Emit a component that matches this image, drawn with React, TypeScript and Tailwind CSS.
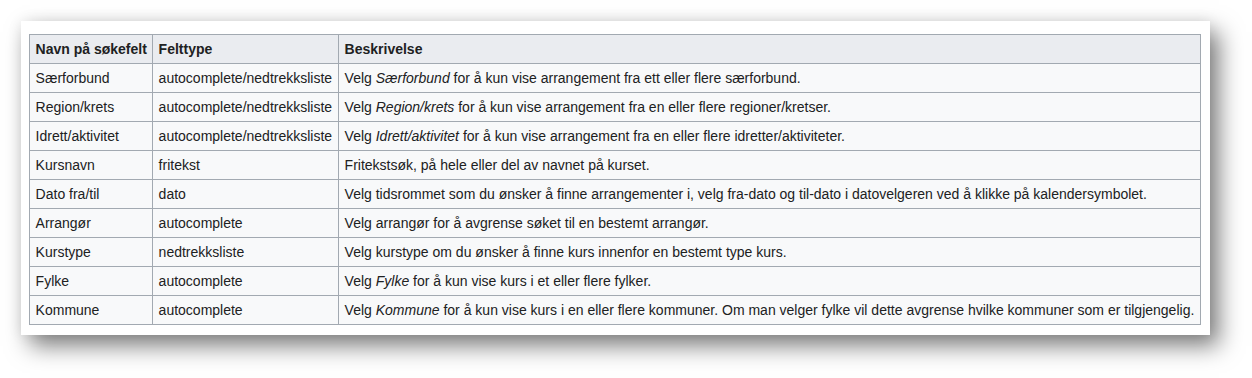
import React from 'react';

type Row = {
  name: string;
  type: string;
  desc: React.ReactNode;
};

const rows: Row[] = [
  {
    name: 'Særforbund',
    type: 'autocomplete/nedtrekksliste',
    desc: (
      <>
        Velg <i>Særforbund</i> for å kun vise arrangement fra ett eller flere særforbund.
      </>
    ),
  },
  {
    name: 'Region/krets',
    type: 'autocomplete/nedtrekksliste',
    desc: (
      <>
        Velg <i>Region/krets</i> for å kun vise arrangement fra en eller flere regioner/kretser.
      </>
    ),
  },
  {
    name: 'Idrett/aktivitet',
    type: 'autocomplete/nedtrekksliste',
    desc: (
      <>
        Velg <i>Idrett/aktivitet</i> for å kun vise arrangement fra en eller flere idretter/aktiviteter.
      </>
    ),
  },
  {
    name: 'Kursnavn',
    type: 'fritekst',
    desc: 'Fritekstsøk, på hele eller del av navnet på kurset.',
  },
  {
    name: 'Dato fra/til',
    type: 'dato',
    desc: 'Velg tidsrommet som du ønsker å finne arrangementer i, velg fra-dato og til-dato i datovelgeren ved å klikke på kalendersymbolet.',
  },
  {
    name: 'Arrangør',
    type: 'autocomplete',
    desc: 'Velg arrangør for å avgrense søket til en bestemt arrangør.',
  },
  {
    name: 'Kurstype',
    type: 'nedtrekksliste',
    desc: 'Velg kurstype om du ønsker å finne kurs innenfor en bestemt type kurs.',
  },
  {
    name: 'Fylke',
    type: 'autocomplete',
    desc: (
      <>
        Velg <i>Fylke</i> for å kun vise kurs i et eller flere fylker.
      </>
    ),
  },
  {
    name: 'Kommune',
    type: 'autocomplete',
    desc: (
      <>
        Velg <i>Kommune</i> for å kun vise kurs i en eller flere kommuner. Om man velger fylke vil dette avgrense hvilke kommuner som er tilgjengelig.
      </>
    ),
  },
];

const cell = 'border border-[#a2a9b1] px-[5.6px] h-[29px] py-0 whitespace-nowrap';

const App = () => {
  return (
    <div className="w-[1252px] h-[378px] bg-white pt-[21px] pl-[21px] font-['Liberation_Sans',Arial,sans-serif]">
      <div className="w-[1189px] h-[314px] bg-white pt-[13px] pl-[8px] shadow-[9px_11px_22px_rgba(0,0,0,0.5),0_0_14px_rgba(0,0,0,0.08)]">
        <table className="border-collapse w-[1172px] text-[14px] leading-[22px] text-[#202122] table-fixed">
          <colgroup>
            <col className="w-[123px]" />
            <col className="w-[186px]" />
            <col />
          </colgroup>
          <thead>
            <tr className="bg-[#eaecf0]">
              <th className={`${cell} text-left font-bold`}>Navn på søkefelt</th>
              <th className={`${cell} text-left font-bold`}>Felttype</th>
              <th className={`${cell} text-left font-bold`}>Beskrivelse</th>
            </tr>
          </thead>
          <tbody>
            {rows.map((r) => (
              <tr key={r.name} className="bg-[#f8f9fa]">
                <td className={cell}>{r.name}</td>
                <td className={cell}>{r.type}</td>
                <td className={cell}>{r.desc}</td>
              </tr>
            ))}
          </tbody>
        </table>
      </div>
    </div>
  );
};

export default App;
